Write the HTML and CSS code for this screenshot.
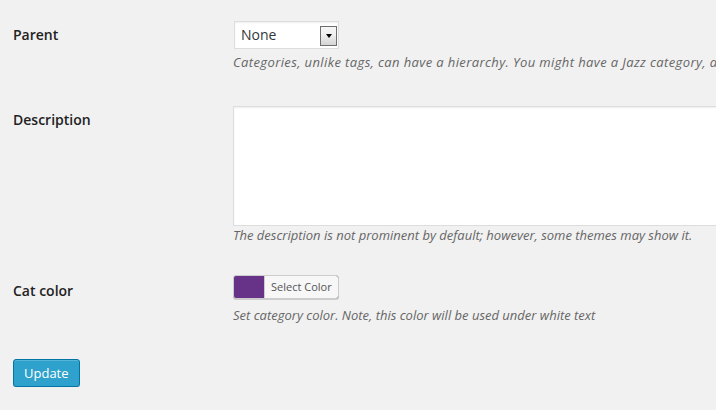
FILE: index.html
```html
<!DOCTYPE html>
<html>
<head>
<meta charset="utf-8">
<link rel="stylesheet" href="styles.css">
</head>
<body>
<form class="edit-form">
  <div class="row row-parent">
    <div class="label">Parent</div>
    <div class="field">
      <div class="select">
        <span class="select-value">None</span>
        <span class="select-arrow"><span class="tri"></span></span>
      </div>
      <p class="desc desc-wide">Categories, unlike tags, can have a hierarchy. You might have a Jazz category, and under that have children categories for Bebop and Big Band. Totally optional.</p>
    </div>
  </div>
  <div class="row row-desc">
    <div class="label">Description</div>
    <div class="field">
      <div class="textarea"></div>
      <p class="desc desc-tight">The description is not prominent by default; however, some themes may show it.</p>
    </div>
  </div>
  <div class="row row-color">
    <div class="label label-color">Cat color</div>
    <div class="field">
      <div class="color-result"><span class="swatch"></span><span class="color-text">Select Color</span></div>
      <p class="desc desc-color">Set category color. Note, this color will be used under white text</p>
    </div>
  </div>
  <div class="submit">
    <button type="button" class="button-primary">Update</button>
  </div>
</form>
</body>
</html>
```
FILE: styles.css
```css
html, body {
  margin: 0;
  padding: 0;
  background: #f1f1f1;
  overflow: hidden;
}
body {
  font-family: "Open Sans", "Liberation Sans", sans-serif;
  color: #444;
  font-size: 13px;
}
.edit-form {
  padding: 6px 0 0 13px;
}
.row {
  display: grid;
  grid-template-columns: 220px 1fr;
  padding: 15px 0;
}
.row-parent {
  padding-bottom: 18px;
}
.label {
  padding-top: 5px;
  font-size: 14px;
  font-weight: 600;
  line-height: 18px;
  color: #222;
  white-space: nowrap;
}
.label-color {
  padding-top: 7px;
}
.field {
  min-width: 0;
  overflow: hidden;
}
.select {
  box-sizing: border-box;
  margin-left: 1px;
  width: 105px;
  height: 28px;
  background: #fff;
  border: 1px solid #ddd;
  box-shadow: inset 0 1px 2px rgba(0,0,0,.07);
  display: flex;
  align-items: flex-start;
  justify-content: space-between;
  padding: 0 1px 0 6px;
}
.select-value {
  font-size: 14px;
  line-height: 26px;
  color: #32373c;
}
.select-arrow {
  box-sizing: border-box;
  margin-top: 4px;
  width: 17px;
  height: 20px;
  border: 1px solid #6e6e6e;
  background: linear-gradient(#f6f6f6, #f0f0f0 40%, #d4d4d4);
  display: flex;
  align-items: center;
  justify-content: center;
}
.tri {
  width: 0;
  height: 0;
  border-left: 3.5px solid transparent;
  border-right: 3.5px solid transparent;
  border-top: 4px solid #000;
}
.desc {
  margin: 4px 0 0;
  font-size: 13px;
  font-style: italic;
  line-height: 19.5px;
  color: #666;
  white-space: nowrap;
}
.desc-wide {
  letter-spacing: 0.39px;
}
.desc-tight {
  margin-top: 0;
}
.desc-color {
  margin-top: 7px;
}
.textarea {
  box-sizing: border-box;
  width: 520px;
  height: 120px;
  background: #fff;
  border: 1px solid #ddd;
  box-shadow: inset 0 1px 2px rgba(0,0,0,.07);
}
.color-result {
  box-sizing: border-box;
  display: inline-flex;
  height: 24px;
  border: 1px solid #ccc;
  border-radius: 3px;
  background: #663388;
  box-shadow: 0 1px 0 #ccc;
  vertical-align: top;
}
.swatch {
  width: 30px;
}
.color-text {
  background: #f7f7f7;
  border-left: 1px solid #ccc;
  border-radius: 0 2px 2px 0;
  padding: 0 6px;
  font-size: 11px;
  line-height: 22px;
  color: #555;
}
.submit {
  padding-top: 18px;
}
.button-primary {
  box-sizing: border-box;
  height: 28px;
  padding: 0 10px 1px;
  font-family: "Open Sans", "Liberation Sans", sans-serif;
  font-size: 13px;
  line-height: 26px;
  color: #fff;
  background: #2ea2cc;
  border: 1px solid #0074a2;
  border-radius: 3px;
  box-shadow: inset 0 1px 0 rgba(120,200,230,.5), 0 1px 0 rgba(0,0,0,.15);
}
```
